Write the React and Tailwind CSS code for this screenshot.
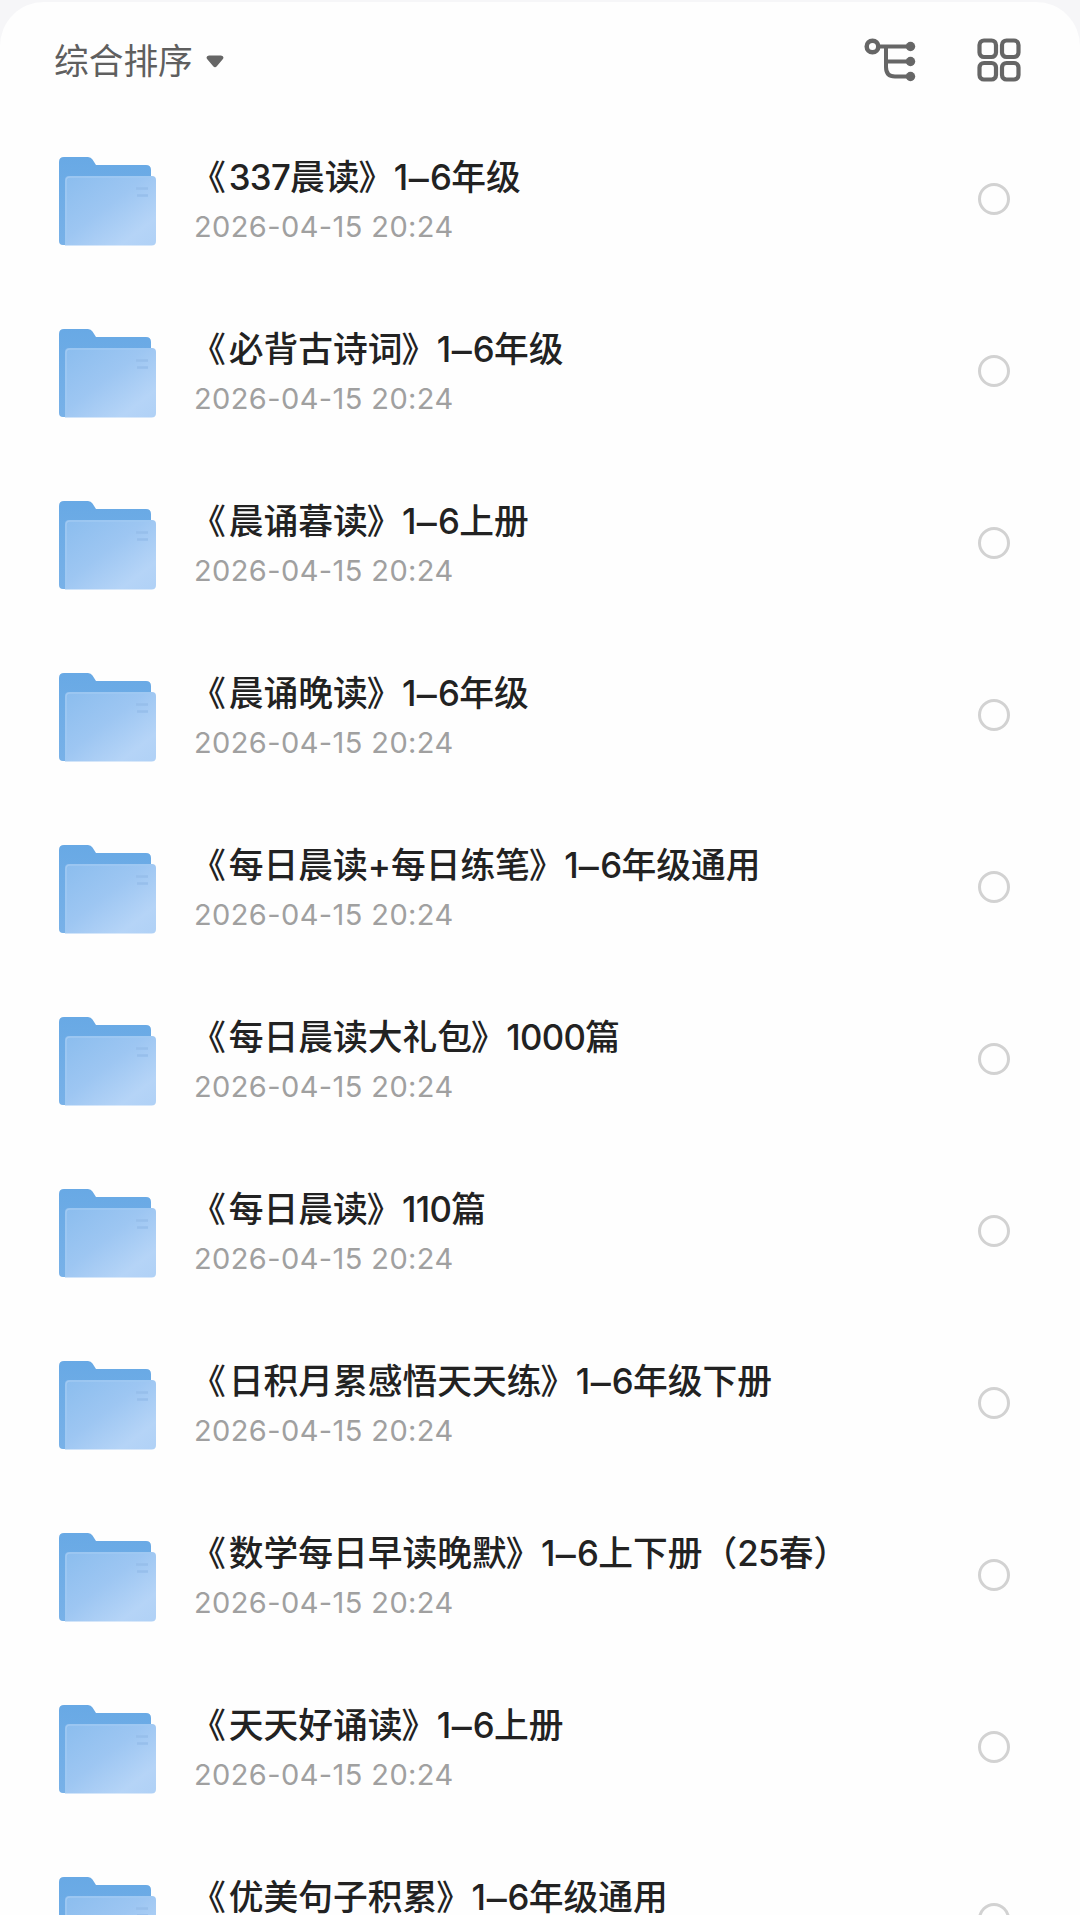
const FILES = [
  { name: "《337晨读》1–6年级", time: "2026-04-15 20:24" },
  { name: "《必背古诗词》1–6年级", time: "2026-04-15 20:24" },
  { name: "《晨诵暮读》1–6上册", time: "2026-04-15 20:24" },
  { name: "《晨诵晚读》1–6年级", time: "2026-04-15 20:24" },
  { name: "《每日晨读+每日练笔》1–6年级通用", time: "2026-04-15 20:24" },
  { name: "《每日晨读大礼包》1000篇", time: "2026-04-15 20:24" },
  { name: "《每日晨读》110篇", time: "2026-04-15 20:24" },
  { name: "《日积月累感悟天天练》1–6年级下册", time: "2026-04-15 20:24" },
  { name: "《数学每日早读晚默》1–6上下册（25春）", time: "2026-04-15 20:24" },
  { name: "《天天好诵读》1–6上册", time: "2026-04-15 20:24" },
  { name: "《优美句子积累》1–6年级通用", time: "2026-04-15 20:24" },
];

function FolderIcon() {
  return (
    <svg width="98" height="90" viewBox="0 0 98 90" className="shrink-0">
      <defs>
        <linearGradient id="folderBack" x1="0" y1="0" x2="0" y2="1">
          <stop offset="0" stopColor="#68a9e5" />
          <stop offset="1" stopColor="#78b1e8" />
        </linearGradient>
        <linearGradient id="folderFront" x1="0" y1="0" x2="1" y2="1">
          <stop offset="0" stopColor="#8bbdee" />
          <stop offset="0.45" stopColor="#9dc6f2" />
          <stop offset="0.8" stopColor="#b5d4f7" />
          <stop offset="1" stopColor="#b0d1f6" />
        </linearGradient>
      </defs>
      <path
        d="M0 5Q0 0 5 0H29Q32 0 33.500 2.500L37 8H87Q92 8 92 13V88H4Q0 88 0 84Z"
        fill="url(#folderBack)"
      />
      <path
        d="M6 23Q6 19 10 19H93Q97 19 97 23V84Q97 88.500 92.500 88.500H6Z"
        fill="url(#folderFront)"
      />
      <path d="M7 88V24Q7 20 11 20H93" fill="none" stroke="#a0c9f2" strokeWidth="1.5" />
      <path d="M77 31.500H89M78 38.500H89" stroke="#97bfeb" strokeWidth="2.500" />
    </svg>
  );
}

function TreeIcon() {
  return (
    <svg width="52" height="44" viewBox="0 0 52 44" fill="none" stroke="#666666" strokeWidth="4">
      <circle cx="8.500" cy="8.500" r="5.800" strokeWidth="4.500" />
      <path d="M14 8.500H46M22 8.500V29Q22 38.500 31 38.500H46M22 23.500H46" />
      <g fill="#666666" stroke="none">
        <circle cx="46.500" cy="8.500" r="4.700" />
        <circle cx="46.500" cy="23.500" r="4.700" />
        <circle cx="46.500" cy="38.500" r="4.700" />
      </g>
    </svg>
  );
}

function GridIcon() {
  return (
    <svg width="44" height="44" viewBox="0 0 44 44" fill="none" stroke="#666666" strokeWidth="4.200">
      <rect x="2.500" y="2.500" width="16.500" height="16.500" rx="4.500" />
      <rect x="25" y="2.500" width="16.500" height="16.500" rx="4.500" />
      <rect x="2.500" y="25" width="16.500" height="16.500" rx="4.500" />
      <rect x="25" y="25" width="16.500" height="16.500" rx="4.500" />
    </svg>
  );
}

// brackets, digits and the dash each get their own spacing
const RUN_CLASS = {
  "《": "-ml-[3px] mr-[3px]",
  "》": "-ml-px mr-[0.500px]",
  "–": "mx-[2.500px] inline-block scale-x-115 translate-y-px",
};

function FileName({ name }) {
  const runs = name.split(/([《》–]|\d+)/).filter(Boolean);
  return runs.map((run, i) => (
    <span key={i} className={RUN_CLASS[run] || (/^\d/.test(run) ? "tracking-[-0.700px]" : "")}>
      {run}
    </span>
  ));
}

function FileRow({ file }) {
  return (
    <li className="flex h-[172px] shrink-0 items-center pr-[70px] pl-[59px]">
      <FolderIcon />
      <div className="ml-[37px] flex-1 whitespace-nowrap">
        <div className="text-[34.750px] leading-[50px] font-medium text-[#222222]">
          <FileName name={file.name} />
        </div>
        <div className="text-[29px] leading-[50px] tracking-[0.400px] text-[#a0a0a0]">{file.time}</div>
      </div>
      <button className="mb-[6px] size-8 rounded-full border-3 border-[#d2d2d2]" aria-label="选择" />
    </li>
  );
}

export default function App() {
  return (
    <div className="h-[1915px] overflow-hidden bg-[#f6f6f8] pt-[2px] font-[Inter,'Noto_Sans_CJK_SC',sans-serif]">
      <main className="h-full rounded-t-[44px] bg-[#fefefe]">
        <header className="flex h-[113.500px] items-start justify-between pt-[36px] pr-[59px] pl-[54px]">
          <button className="flex items-center text-[34.700px] leading-[46px] text-[#5f5f5f]">
            <span>综合排序</span>
            <svg width="18" height="13" viewBox="0 0 18 13" className="ml-[13px]">
              <path
                d="M3 0.500H15Q19 1.500 16.500 4.500L11 11Q9 13.500 7 11L1.500 4.500Q-1 1.500 3 0.500Z"
                fill="#666666"
              />
            </svg>
          </button>
          <div className="flex items-center gap-[61px]">
            <TreeIcon />
            <GridIcon />
          </div>
        </header>
        <ul>
          {FILES.map((file) => (
            <FileRow key={file.name} file={file} />
          ))}
        </ul>
      </main>
    </div>
  );
}
